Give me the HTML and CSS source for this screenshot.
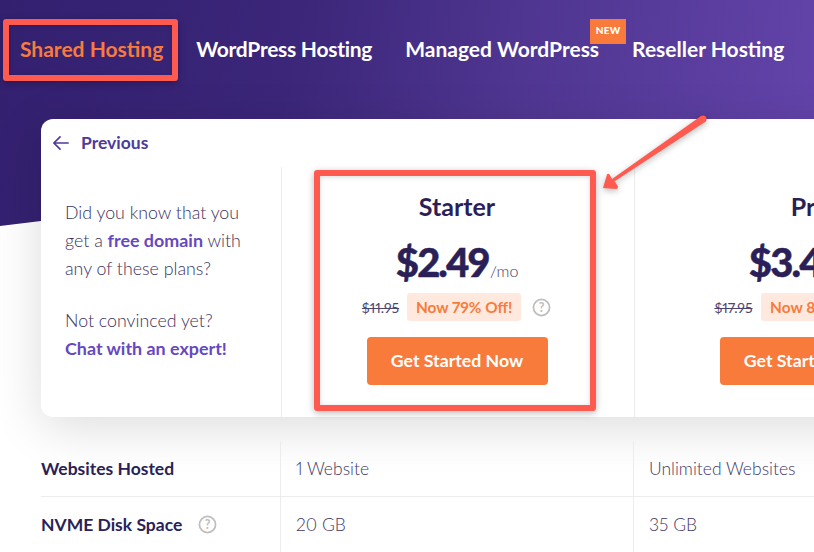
FILE: index.html
```html
<!DOCTYPE html>
<html lang="en">
<head>
<meta charset="utf-8">
<title>Hosting plans</title>
<link rel="stylesheet" href="styles.css">
</head>
<body>
<div class="page">
  <div class="hero-bg"></div>
  <nav class="nav">
    <a class="nav-item active">Shared Hosting</a>
    <a class="nav-item nav-tight">WordPress Hosting</a>
    <a class="nav-item has-badge">Managed WordPress<span class="badge-new">NEW</span></a>
    <a class="nav-item">Reseller Hosting</a>
  </nav>
  <section class="card">
    <div class="prev">
      <svg class="prev-icon" viewBox="0 0 18 16" width="17" height="16"><path d="M17 8H2M8.500 1.500 2 8l6.500 6.500" fill="none" stroke="#4f3a9b" stroke-width="1.800" stroke-linecap="round" stroke-linejoin="round"/></svg>
      <span>Previous</span>
    </div>
    <div class="plans">
      <div class="intro">
        <p>Did you know that you<br>get a <b>free domain</b> with<br>any of these plans?</p>
        <p>Not convinced yet?<br><b>Chat with an expert!</b></p>
      </div>
      <div class="plan">
        <h2>Starter</h2>
        <div class="price"><strong>$2.49</strong><span>/mo</span></div>
        <div class="deal">
          <s>$11.95</s><span class="off">Now 79% Off!</span>
          <svg class="help" viewBox="0 0 20 20" width="19" height="19"><circle cx="10" cy="10" r="8.500" fill="none" stroke="#bdbdbd" stroke-width="1.800"/><text x="10" y="14.500" text-anchor="middle" class="help-q">?</text></svg>
        </div>
        <a class="cta">Get Started Now</a>
      </div>
      <div class="plan">
        <h2>Pro</h2>
        <div class="price"><strong>$3.49</strong><span>/mo</span></div>
        <div class="deal">
          <s>$17.95</s><span class="off">Now 81% Off!</span>
          <svg class="help" viewBox="0 0 20 20" width="19" height="19"><circle cx="10" cy="10" r="8.500" fill="none" stroke="#bdbdbd" stroke-width="1.800"/><text x="10" y="14.500" text-anchor="middle" class="help-q">?</text></svg>
        </div>
        <a class="cta">Get Started Now</a>
      </div>
    </div>
  </section>
  <section class="specs">
    <div class="spec-row">
      <div class="spec-label">Websites Hosted</div>
      <div class="spec-val">1 Website</div>
      <div class="spec-val">Unlimited Websites</div>
    </div>
    <div class="spec-row">
      <div class="spec-label">NVME Disk Space
        <svg class="help" viewBox="0 0 20 20" width="19" height="19"><circle cx="10" cy="10" r="8.500" fill="none" stroke="#bdbdbd" stroke-width="1.800"/><text x="10" y="14.500" text-anchor="middle" class="help-q">?</text></svg>
      </div>
      <div class="spec-val">20 GB</div>
      <div class="spec-val">35 GB</div>
    </div>
  </section>
  <div class="mark mark-nav"></div>
  <div class="mark mark-plan"></div>
  <svg class="mark-arrow" viewBox="0 0 814 552" width="814" height="552">
    <g fill="#ff5a4f">
      <circle cx="703" cy="119" r="3.500"/>
      <path d="M704.900 121.900 612.800 182.600 611 179.800 701.100 116.100Z"/>
      <path d="M603 188 607 174.500 Q608 173 609.500 174.500 L612 179 615 182 618 186.500 Q618 189 616 189Z"/>
    </g>
  </svg>
</div>
</body>
</html>
```

FILE: styles.css
```css
* { box-sizing: border-box; }
html, body { margin: 0; padding: 0; background: #fff; }
body { font-family: "Lato", "Liberation Sans", sans-serif; color: #2b1f57; font-variant-numeric: proportional-nums; }
.page { position: relative; width: 814px; height: 552px; overflow: hidden; background: #fff; }
.hero-bg {
  position: absolute; left: 0; top: 0; width: 814px; height: 240px;
  background: linear-gradient(100deg, #33206f 0%, #3b2679 35%, #4f3691 62%, #6444ab 100%);
  clip-path: polygon(0 226px, 41px 221px, 814px 120px, 814px 0, 0 0);
}
.nav { position: relative; display: flex; align-items: center; height: 96px; padding-left: 20px; font-size: 21px; font-weight: 700; color: #fff; }
.nav-item { display: block; margin-right: 33px; white-space: nowrap; }
.nav-item.active { color: #f97b3c; }
.nav-tight { letter-spacing: -.27px; }
.has-badge { position: relative; margin-right: 33px; }
.badge-new { position: absolute; left: 185px; top: -17px; width: 36px; height: 25px; padding-top: 5px; background: #f97b3c; color: #fff; font-size: 10px; line-height: 12px; font-weight: 900; text-align: center; letter-spacing: .3px; }
.card { position: relative; margin: 23px 0 0 41px; width: 1000px; height: 298px; background: #fff; border-radius: 12px; box-shadow: 0 10px 50px rgba(0,0,0,.14); }
.prev { display: flex; align-items: center; gap: 12px; height: 47px; margin-bottom: 1px; padding-left: 11px; color: #4f3a9b; font-size: 17.500px; font-weight: 700; }
.plans { display: grid; grid-template-columns: 241px 353px 353px; height: 250px; }
.intro { padding: 31px 0 0 24px; font-size: 17.800px; font-weight: 300; line-height: 28px; color: #3a3260; border-right: 1px solid #ececec; }
.intro p { margin: 0 0 24px; }
.intro b { color: #6648c0; font-size: 17.900px; font-weight: 700; }
.plan { display: flex; flex-direction: column; align-items: center; padding-right: 2px; border-right: 1px solid #ececec; }
.plan h2 { margin: 25px 0 0; height: 28px; font-size: 25px; line-height: 28px; font-weight: 700; color: #2b1f57; }
.price { display: flex; align-items: baseline; margin-top: 16px; height: 52px; line-height: 52px; color: #2b1f57; }
.price strong { font-size: 40px; font-weight: 900; letter-spacing: -2px; -webkit-text-stroke: .5px #2b1f57; }
.price span { font-size: 16px; font-weight: 300; color: #3f3766; margin-left: 2px; }
.deal { display: flex; align-items: center; height: 28px; margin-top: 5px; margin-left: -1px; }
.deal s { font-size: 14px; font-weight: 400; color: #4d4672; margin-right: 8px; }
.off { display: block; height: 28px; line-height: 28px; width: 114px; text-align: center; background: #ffe9de; border-radius: 3px; color: #f97b3c; font-size: 15.400px; font-weight: 700; white-space: nowrap; }
.deal .help { margin-left: 11px; }
.help { display: block; flex: none; }
.help-q { font: 700 13px "Lato", sans-serif; fill: #bdbdbd; }
.cta { display: block; width: 181px; height: 48px; margin-top: 16px; line-height: 48px; text-align: center; background: #f97b3c; color: #fff; border-radius: 4px; font-size: 17.700px; font-weight: 700; white-space: nowrap; }
.specs { position: relative; margin: 24px 0 0 41px; width: 1000px; }
.spec-row { display: grid; grid-template-columns: 239px 353px 353px; height: 56px; border-bottom: 1px solid #ececec; }
.spec-row:last-child { border-bottom-color: transparent; }
.spec-label { display: flex; align-items: center; gap: 16px; font-size: 17.500px; font-weight: 700; color: #2b1f57; }
.spec-val { display: flex; align-items: center; padding-left: 15px; font-size: 17.500px; font-weight: 300; color: #3f3766; border-left: 1px solid #ececec; }
.mark { position: absolute; border: 6px solid #ff5a4f; border-radius: 3px; box-shadow: 0 2px 7px rgba(0,0,0,.28), inset 0 1px 5px rgba(0,0,0,.15); }
.mark-nav { left: 3px; top: 19px; width: 175px; height: 62px; }
.mark-plan { left: 314px; top: 170px; width: 282px; height: 241px; }
.mark-arrow { position: absolute; left: 0; top: 0; filter: drop-shadow(0 2px 3px rgba(0,0,0,.28)); }
```
